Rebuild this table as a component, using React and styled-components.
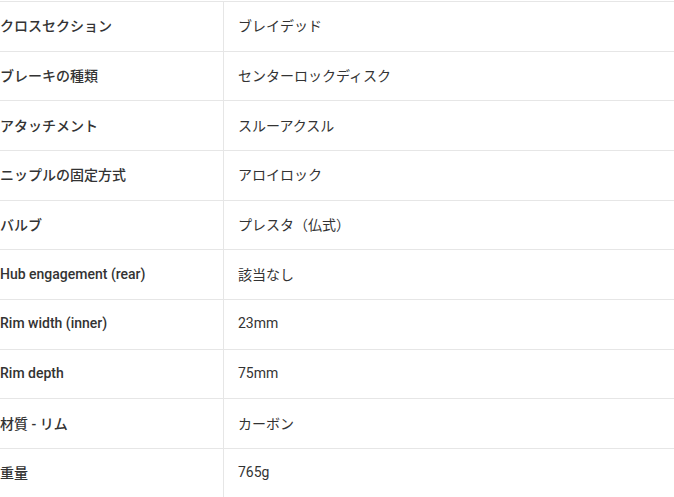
import React from 'react';
import styled, { createGlobalStyle } from 'styled-components';

const GlobalStyle = createGlobalStyle`
  html, body {
    margin: 0;
    padding: 0;
    background: #ffffff;
  }
  body {
    font-family: Roboto, "Noto Sans CJK JP", sans-serif;
    -webkit-font-smoothing: antialiased;
  }
`;

const SpecTable = styled.div`
  padding-top: 1px;
  width: 674px;
  display: grid;
  grid-template-columns: 224px 1fr;
  grid-auto-rows: 49.67px;
`;

const Row = styled.div`
  display: contents;
`;

const Cell = styled.div`
  box-sizing: border-box;
  display: flex;
  align-items: center;
  border-top: 1px solid #e6e6e6;
  font-size: 14px;
  color: #333333;
  white-space: nowrap;
  padding-left: ${(p) => (p.$label ? '0' : '14px')};
  font-weight: ${(p) => (p.$label ? 500 : 400)};
  border-right: ${(p) => (p.$label ? '1px solid #e6e6e6' : 'none')};
  padding-bottom: 2px;
`;

const specs = [
  ['クロスセクション', 'ブレイデッド'],
  ['ブレーキの種類', 'センターロックディスク'],
  ['アタッチメント', 'スルーアクスル'],
  ['ニップルの固定方式', 'アロイロック'],
  ['バルブ', 'プレスタ（仏式）'],
  ['Hub engagement (rear)', '該当なし'],
  ['Rim width (inner)', '23mm'],
  ['Rim depth', '75mm'],
  ['材質 - リム', 'カーボン'],
  ['重量', '765g'],
];

function App() {
  return (
    <>
      <GlobalStyle />
      <SpecTable>
        {specs.map(([label, value]) => (
          <Row key={label}>
            <Cell $label>{label}</Cell>
            <Cell>{value}</Cell>
          </Row>
        ))}
      </SpecTable>
    </>
  );
}

export default App;
